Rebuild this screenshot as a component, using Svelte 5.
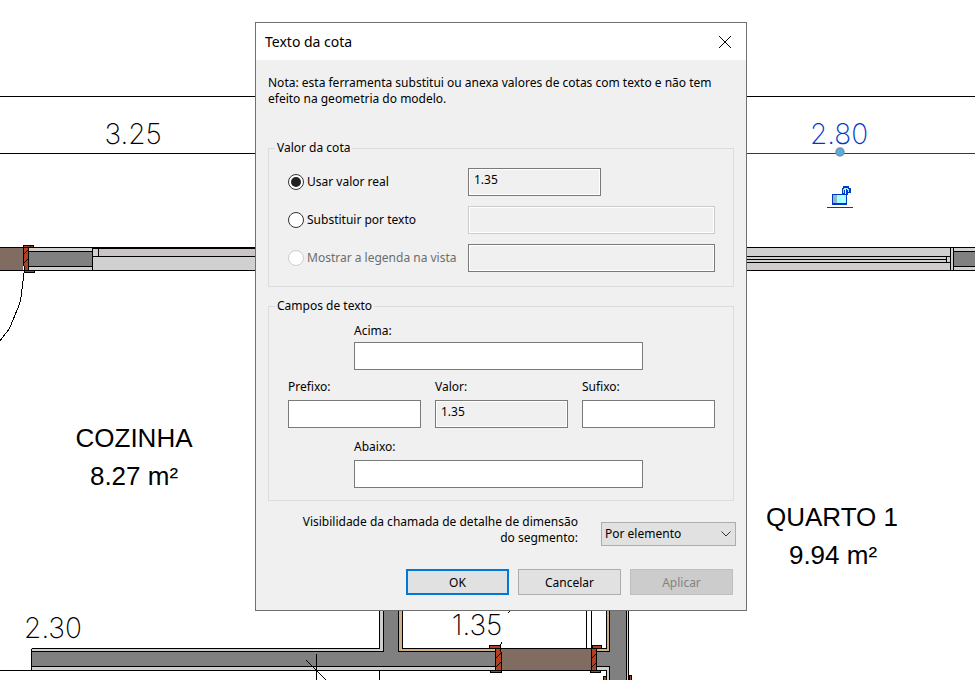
<script lang="ts">
	interface PlanLabel {
		text: string;
		x: number;
		y: number;
		kind: 'dimension' | 'selected' | 'room';
	}

	const planLabels: PlanLabel[] = [
		{ text: '3.25', x: 133, y: 144, kind: 'dimension' },
		{ text: '2.80', x: 839, y: 144, kind: 'selected' },
		{ text: '2.30', x: 53, y: 638, kind: 'dimension' },
		{ text: '1.35', x: 477, y: 635, kind: 'dimension' },
		{ text: 'COZINHA', x: 134, y: 447, kind: 'room' },
		{ text: '8.27 m²', x: 134, y: 485, kind: 'room' },
		{ text: 'QUARTO 1', x: 832, y: 526, kind: 'room' },
		{ text: '9.94 m²', x: 833, y: 564, kind: 'room' }
	];

	let open = $state(true);
	let mode = $state('real');
	let replacement = $state('');
	let above = $state('');
	let prefix = $state('');
	let suffix = $state('');
	let below = $state('');
	let visibility = $state('element');

	const actualValue = '1.35';

	function close() {
		open = false;
	}
</script>

<main class="workspace">
	<svg class="plan" viewBox="0 0 975 680" preserveAspectRatio="xMidYMid slice">
		<g shape-rendering="crispEdges">
			<!-- upper wall, left side -->
			<rect x="0" y="247" width="23" height="23" fill="#806c60" />
			<rect x="28" y="247" width="230" height="23" fill="#d0d0d0" />
			<rect x="28" y="252" width="64" height="14" fill="#808080" />
			<rect x="98" y="248" width="160" height="8" fill="#c8c4c8" />
			<!-- upper wall, right side -->
			<rect x="740" y="247" width="235" height="23" fill="#d0d0d0" />
			<rect x="740" y="262" width="209" height="8" fill="#d0cccd" />
			<rect x="954" y="252" width="21" height="14" fill="#808080" />
			<!-- lower walls -->
			<path d="M31 648H379V600H402V648H495V670H31Z" fill="#d0d0d0" />
			<path d="M31 652H384V600H398V652H495V666H31Z" fill="#808080" />
			<path d="M399 600H402V648H495V651H399Z" fill="#d0b088" />
			<rect x="501" y="648" width="90" height="22" fill="#806c60" />
			<path d="M596 648H606V600H629V680H606V670H596Z" fill="#d0d0d0" />
			<path d="M596 652H610V600H626V680H610V666H596Z" fill="#808080" />
			<path d="M596 648H606V600H609V651H596Z" fill="#d0b088" />
		</g>

		<g class="ink" transform="translate(0.5 0.5)">
			<path d="M-1 96H975M-1 153H300" />
			<path class="accent" d="M740 153H975" />
			<path d="M-1 247H300M92 248H300M-1 270H300M28 251H92M28 266H92M92 247V270M98 248V256M92 256H300" />
			<path d="M23 272V277L20 300L18 306L9 328L-1 341" />
			<path d="M740 247H975M740 270H975M740 256H949M740 259H946M740 262H949M946 256V262M950 247V270M953 247V270M953 251H975M953 266H975" />

			<path d="M-1 670H495M31 648V670M31 648H379V600M31 651H383V600M31 666H495" />
			<path d="M398 600V651H495M402 600V648H606V600M501 670H606V680M379 670V680" />
			<path d="M586 600V648M591 600V648M596 651H609V600M596 666H609V680M626 600V680M628 600V680" />
			<path d="M316 653V680M306 660L326 680M509 610L508 613M501 642L500 645" />

			<g class="jamb">
				<path d="M23 247V265L24 266V270H28V247ZM23 245H33V247H23ZM30 245V247M24 270H34V272H24ZM23 254L28 249M23 263L28 258" />
				<path d="M495 648V670H501V652L500 651V648ZM489 645H500V648H489ZM490 670H501V672H490ZM495 658L500 653M495 667L501 661" />
				<path d="M591 648V670H596V648ZM592 645H601V648H592ZM590 670H600V672H590ZM591 658L596 653M591 667L596 662" />
				<path d="M603 676H606V680H603ZM629 675H631V680H629Z" />
			</g>
		</g>

		<circle cx="840" cy="152" r="4" fill="#4fb0e8" stroke="#7f8ea5" stroke-width="1.5" />

		<!-- open padlock -->
		<g shape-rendering="crispEdges">
			<rect x="832" y="194" width="15" height="11" fill="#0038c8" />
			<rect x="833" y="195" width="4" height="8" fill="#90b8c8" />
			<rect x="837" y="195" width="9" height="8" fill="#a0ffff" />
			<rect x="841" y="195" width="3" height="8" fill="#b8ffff" />
			<path d="M842 194V188H843V186H849V188H851V193H848V195H846V189H845V194Z" fill="#0038c8" />
			<path d="M844 188H848V189H849V192H848V190H847V189H845V190H844V193H843V189H844Z" fill="#a0e8f8" />
			<rect x="827" y="207" width="26" height="1" fill="#0038c8" />
		</g>

		{#each planLabels as label}
			<text class={label.kind} x={label.x} y={label.y}>{label.text}</text>
		{/each}
	</svg>

	{#if open}
		<form class="dialog" role="dialog" aria-labelledby="dialog-title" onsubmit={(e) => e.preventDefault()}>
			<header class="titlebar">
				<h1 id="dialog-title">Texto da cota</h1>
				<button type="button" class="btn-close" aria-label="Fechar" onclick={close}>
					<svg width="12" height="12" viewBox="0 0 12 12">
						<path d="M0 0L12 12M12 0L0 12" />
					</svg>
				</button>
			</header>

			<div class="content">
				<p class="note">
					Nota: esta ferramenta substitui ou anexa valores de cotas com texto e não tem<br />
					efeito na geometria do modelo.
				</p>

				<fieldset class="group">
					<legend>Valor da cota</legend>
					<div class="options">
						<label class="option">
							<input type="radio" value="real" bind:group={mode} />
							Usar valor real
						</label>
						<input class="short" type="text" value={actualValue} readonly aria-label="Valor real" />

						<label class="option">
							<input type="radio" value="text" bind:group={mode} />
							Substituir por texto
						</label>
						<input
							type="text"
							bind:value={replacement}
							disabled={mode !== 'text'}
							aria-label="Texto substituto"
						/>

						<label class="option disabled">
							<input type="radio" value="legend" bind:group={mode} disabled />
							Mostrar a legenda na vista
						</label>
						<input type="text" readonly aria-label="Legenda" />
					</div>
				</fieldset>

				<fieldset class="group fields">
					<legend>Campos de texto</legend>
					<div class="field-rows">
						<div class="field wide first">
							<label for="above">Acima:</label>
							<input id="above" type="text" bind:value={above} />
						</div>
						<div class="columns">
							<div class="field">
								<label for="prefix">Prefixo:</label>
								<input id="prefix" type="text" bind:value={prefix} />
							</div>
							<div class="field">
								<label for="value">Valor:</label>
								<input id="value" type="text" value={actualValue} readonly />
							</div>
							<div class="field">
								<label for="suffix">Sufixo:</label>
								<input id="suffix" type="text" bind:value={suffix} />
							</div>
						</div>
						<div class="field wide">
							<label for="below">Abaixo:</label>
							<input id="below" type="text" bind:value={below} />
						</div>
					</div>
				</fieldset>

				<div class="visibility">
					<label for="visibility">
						Visibilidade da chamada de detalhe de dimensão<br />do segmento:
					</label>
					<div class="select">
						<select id="visibility" bind:value={visibility}>
							<option value="element">Por elemento</option>
							<option value="on">Ativado</option>
							<option value="off">Desativado</option>
						</select>
						<svg width="10" height="6" viewBox="0 0 10 6">
							<path d="M0.5 0.5L5 5L9.5 0.5" />
						</svg>
					</div>
				</div>

				<footer class="actions">
					<button type="submit" class="btn default" onclick={close}>OK</button>
					<button type="button" class="btn" onclick={close}>Cancelar</button>
					<button type="button" class="btn" disabled>Aplicar</button>
				</footer>
			</div>
		</form>
	{/if}
</main>

<style>
	:global(body) {
		margin: 0;
		background: #fff;
	}

	.workspace {
		position: relative;
		min-height: 100vh;
		overflow: hidden;
		font: 12px/16px 'Noto Sans', 'Open Sans', sans-serif;
		color: #000;
	}

	.plan {
		position: absolute;
		inset: 0;
		width: 100%;
		height: 100%;
	}

	.ink {
		fill: none;
		stroke: #000;
		stroke-width: 1;
		shape-rendering: crispEdges;
	}

	.accent {
		stroke: #0038c8;
	}

	.jamb {
		fill: #b04020;
	}

	.plan text {
		text-anchor: middle;
	}

	.dimension,
	.selected {
		font-family: Inter, sans-serif;
		font-size: 28px;
		font-weight: 200;
	}

	.selected {
		fill: #0038c8;
	}

	.room {
		font-family: 'Liberation Sans', Arial, sans-serif;
		font-size: 26px;
	}

	.dialog {
		position: absolute;
		top: 22px;
		left: 255px;
		box-sizing: border-box;
		width: 492px;
		background: #f0f0f0;
		border: 1px solid #707070;
	}

	.titlebar {
		display: flex;
		align-items: center;
		justify-content: space-between;
		height: 37px;
		padding: 0 8px 0 9px;
		background: #fff;
	}

	.titlebar h1 {
		margin: 0;
		font: 400 14px/20px 'Noto Sans', 'Open Sans', sans-serif;
	}

	.btn-close {
		display: grid;
		place-items: center;
		width: 26px;
		height: 26px;
		padding: 0;
		background: none;
		border: 0;
	}

	.btn-close svg,
	.select svg {
		fill: none;
		stroke: #000;
	}

	.content {
		padding: 15px 12px;
	}

	.note {
		margin: 0 0 33px;
	}

	.group {
		min-width: 0;
		margin: 0;
		padding: 0 6px;
		border: 1px solid #dcdcdc;
	}

	.group legend {
		padding: 0 2px;
	}

	.fields {
		margin-top: 11px;
	}

	input,
	select,
	button {
		font: inherit;
		color: inherit;
	}

	input[type='text'] {
		box-sizing: border-box;
		width: 100%;
		height: 28px;
		padding: 0 5px 6px;
		background: #fff;
		border: 1px solid #7a7a7a;
		border-radius: 0;
	}

	input[type='text']:read-only,
	input[type='text']:disabled {
		background: #f0f0f0;
		box-shadow: inset 0 0 0 1px #fff;
	}

	input[type='text']:disabled {
		border-color: #ccc;
	}

	.options {
		display: grid;
		grid-template-columns: 180px 1fr;
		gap: 10px 0;
		align-items: center;
		padding: 12px 12px 14px 13px;
	}

	.options .short {
		width: 133px;
	}

	.option {
		display: flex;
		align-items: center;
		gap: 3px;
		line-height: 18px;
		white-space: nowrap;
	}

	.option.disabled {
		color: #6d6d6d;
	}

	input[type='radio'] {
		appearance: none;
		flex: none;
		display: grid;
		place-items: center;
		width: 16px;
		height: 16px;
		margin: 0;
		background: #fff;
		border: 1px solid #333;
		border-radius: 50%;
	}

	input[type='radio']:checked::before {
		content: '';
		width: 10px;
		height: 10px;
		background: #222;
		border-radius: 50%;
	}

	input[type='radio']:disabled {
		border-color: #ccc;
	}

	.field-rows {
		padding: 9px 12px 12px 13px;
	}

	.field {
		display: flex;
		flex-direction: column;
		gap: 5px;
	}

	.field.first {
		gap: 3px;
	}

	.wide {
		width: 289px;
		margin-left: 66px;
	}

	.columns {
		display: grid;
		grid-template-columns: repeat(3, 1fr);
		gap: 14px;
		margin: 9px 0 11px;
	}

	.visibility {
		display: flex;
		align-items: flex-end;
		justify-content: flex-end;
		gap: 23px;
		margin: 13px -2px 23px 0;
		text-align: right;
	}

	.select {
		display: grid;
		align-items: center;
		width: 135px;
	}

	.select select,
	.select svg {
		grid-area: 1 / 1;
	}

	.select select {
		appearance: none;
		width: 100%;
		height: 24px;
		padding: 0 20px 0 3px;
		background: #e1e1e1;
		border: 1px solid #adadad;
		border-radius: 0;
	}

	.select svg {
		justify-self: end;
		margin-right: 5px;
		stroke: #333;
		pointer-events: none;
	}

	.actions {
		display: flex;
		justify-content: flex-end;
		gap: 9px;
		padding-right: 1px;
	}

	.btn {
		width: 103px;
		height: 26px;
		padding: 2px 0 0;
		background: #e1e1e1;
		border: 1px solid #adadad;
	}

	.btn.default {
		border: 2px solid #0078d7;
	}

	.btn:disabled {
		background: #ccc;
		border-color: #bfbfbf;
		color: #838383;
	}
</style>
